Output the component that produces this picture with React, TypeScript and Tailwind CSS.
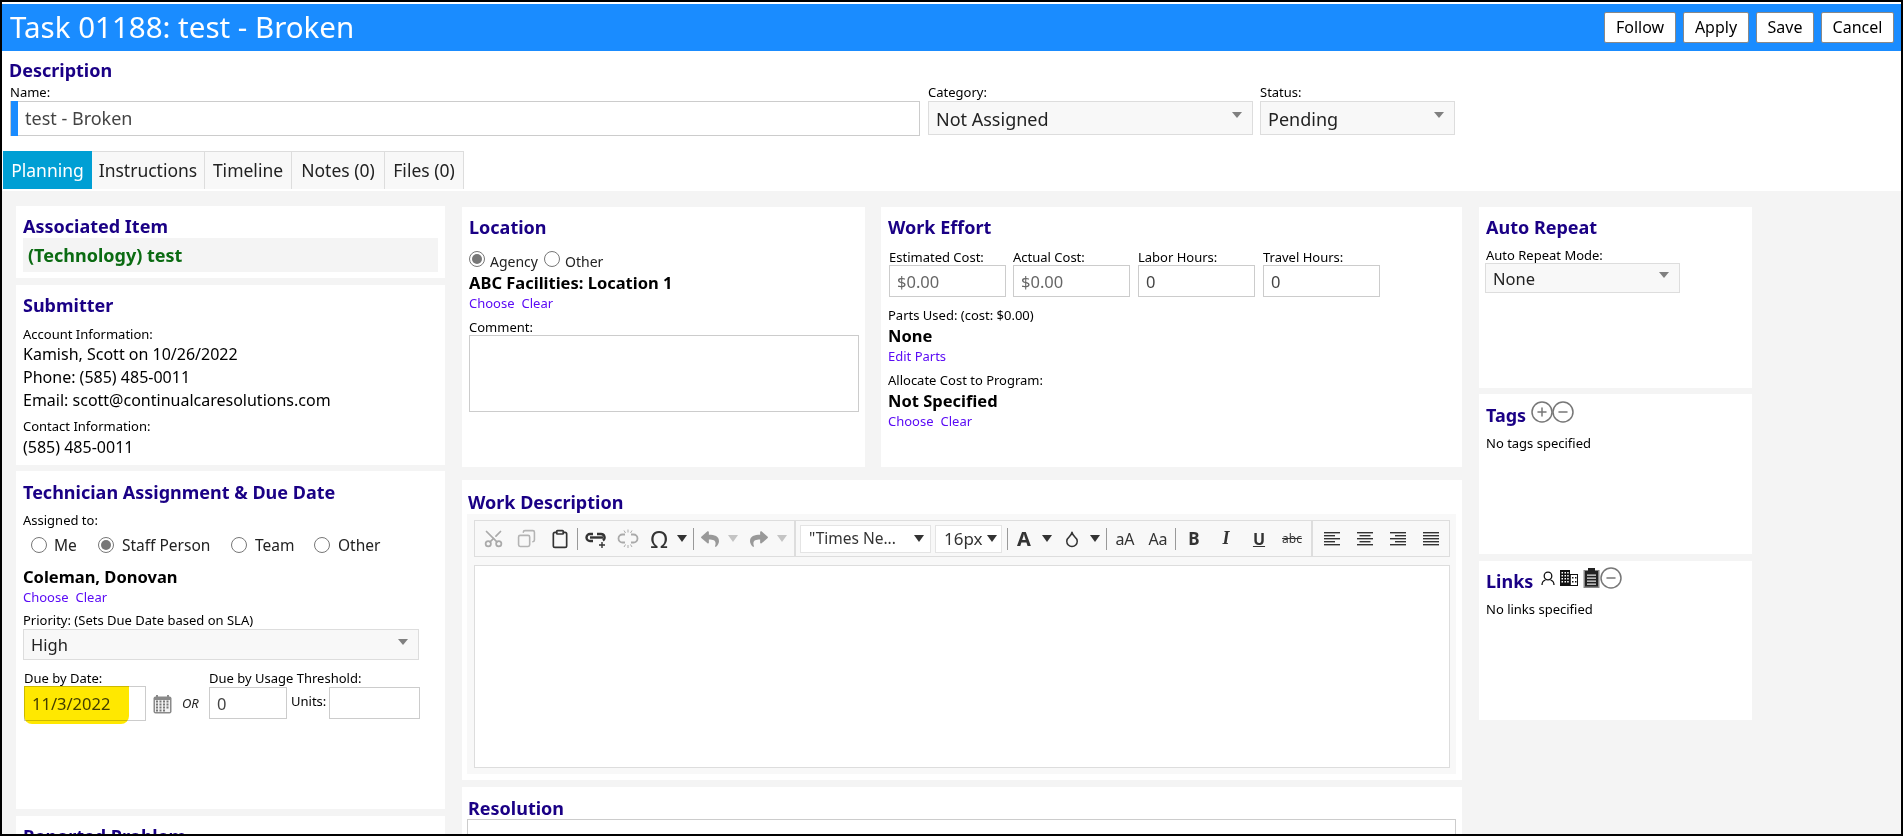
import { CircleMinus, CirclePlus, Clipboard, Copy, Droplet, Scissors } from "lucide-react";
import { FaReply, FaShare } from "react-icons/fa";

const FONT = "font-['Noto_Sans',sans-serif]";

function Heading({ children, className = "" }: { children: React.ReactNode; className?: string }) {
  return <h2 className={`text-[18px] leading-[24px] font-bold text-[#1a0085] whitespace-nowrap ${className}`}>{children}</h2>;
}

function Small({ children, className = "" }: { children: React.ReactNode; className?: string }) {
  return <div className={`text-[13px] leading-[18px] text-black whitespace-nowrap ${className}`}>{children}</div>;
}

function Bold({ children, className = "" }: { children: React.ReactNode; className?: string }) {
  return <div className={`text-[16.5px] leading-[24px] font-bold text-black whitespace-nowrap ${className}`}>{children}</div>;
}

function Links({ className = "" }: { className?: string }) {
  return (
    <div className={`flex gap-[7px] text-[13px] leading-[18px] text-[#5b0cf5] ${className}`}>
      <a>Choose</a>
      <a>Clear</a>
    </div>
  );
}

function Arrow({ className = "" }: { className?: string }) {
  return <span className={`w-0 h-0 border-x-[5px] border-x-transparent border-t-[6px] border-t-[#808080] ${className}`} />;
}

function Select({ value, className = "" }: { value: string; className?: string }) {
  return (
    <div className={`flex items-center justify-between bg-[#f8f8f8] border border-[#dddddd] pl-[7px] pr-[10px] text-[#222] ${className}`}>
      <span className="pt-[2px]">{value}</span>
      <Arrow className="mb-[6px]" />
    </div>
  );
}

function Field({ value, className = "" }: { value: string; className?: string }) {
  return (
    <input
      readOnly
      value={value}
      className={`border border-[#cccccc] bg-white pl-[7px] text-[16.5px] text-[#444] outline-none ${className}`}
    />
  );
}

function Radio({ checked = false, className = "" }: { checked?: boolean; className?: string }) {
  return (
    <span className={`flex items-center justify-center w-[16px] h-[16px] rounded-full border border-[#777] bg-white shrink-0 ${className}`}>
      {checked && <span className="w-[10px] h-[10px] rounded-full bg-[#777]" />}
    </span>
  );
}

function Caret({ light = false }: { light?: boolean }) {
  return (
    <span
      className={`w-0 h-0 border-x-[5px] border-x-transparent border-t-[7px] ${light ? "border-t-[#c4c4c4]" : "border-t-[#333]"}`}
    />
  );
}

function Btn({ className = "", children }: { className?: string; children: React.ReactNode }) {
  return <div className={`flex items-center justify-center h-[35px] shrink-0 text-[#333] ${className}`}>{children}</div>;
}

function Sep({ className = "" }: { className?: string }) {
  return <span className={`w-px h-[22px] bg-[#999] shrink-0 ${className}`} />;
}

function AlignIcon({ kind }: { kind: "left" | "center" | "right" | "full" }) {
  const lines = [16, 11, 16, 11, 16];
  return (
    <svg width="16" height="16" viewBox="0 0 16 16" fill="#333">
      {lines.map((w, i) => {
        const width = kind === "full" ? 16 : w;
        const x = kind === "left" || kind === "full" ? 0 : kind === "right" ? 16 - width : (16 - width) / 2;
        return <rect key={i} x={x} y={1 + i * 3} width={width} height="1.4" />;
      })}
    </svg>
  );
}

function LinkIcon() {
  return (
    <svg width="24" height="20" viewBox="0 0 24 20" fill="none" stroke="#333" strokeWidth="2.4">
      <path d="M9 5H6a3.5 3.5 0 0 0 0 7h3" />
      <path d="M13 5h4a3.5 3.5 0 0 1 2 6.4" />
      <path d="M6 8.5h13" />
      <path d="M18 13v6M15 16h6" strokeWidth="1.4" />
    </svg>
  );
}

function UnlinkIcon() {
  return (
    <svg width="22" height="20" viewBox="0 0 22 20" fill="none" stroke="#aaa" strokeWidth="1.8">
      <path d="M8 5.5H5.5a4 4 0 0 0 0 8H8" />
      <path d="M14 5.5h2.500a4 4 0 0 1 0 8H14" />
      <path d="M7 1.500 8.500 4M11 0.500v3M15 1.500 13.500 4M7 18 8.500 15.500M11 19v-3M15 18l-1.500-2.500" strokeWidth="1" />
    </svg>
  );
}

function Toolbar() {
  return (
    <div className="flex items-center h-[37px] border border-[#dddddd] bg-[#f8f8f8] pl-[2px] whitespace-nowrap">
      <Btn className="w-[33px]"><Scissors size={21} className="text-[#aaa] -rotate-90" /></Btn>
      <Btn className="w-[33px]"><Copy size={19} className="text-[#b4b4b4] -scale-x-100" /></Btn>
      <Btn className="w-[33px]"><Clipboard size={20} className="text-[#333]" /></Btn>
      <Sep className="ml-px" />
      <Btn className="w-[36px]"><LinkIcon /></Btn>
      <Btn className="w-[28px]"><UnlinkIcon /></Btn>
      <Btn className="w-[34px] text-[24px]">Ω</Btn>
      <Btn className="w-[12px]"><Caret /></Btn>
      <Sep className="ml-[5px]" />
      <Btn className="w-[32px]"><FaReply size={18} className="text-[#999]" /></Btn>
      <Btn className="w-[14px]"><Caret light /></Btn>
      <Btn className="w-[38px]"><FaShare size={18} className="text-[#999]" /></Btn>
      <Btn className="w-[8px]"><Caret light /></Btn>
      <span className="w-[2px] h-full bg-[#dddddd] ml-[8px] shrink-0" />
      <div className="flex items-center justify-between w-[131px] h-[28px] ml-[4px] bg-white border border-[#e4e4e4] pl-[8px] pr-[6px] text-[15.500px] text-[#333] shrink-0">
        <span>"Times Ne...</span>
        <Caret />
      </div>
      <div className="flex items-center justify-between w-[67px] h-[28px] ml-[4px] bg-white border border-[#e4e4e4] pl-[8px] pr-[4px] text-[17px] text-[#333] shrink-0">
        <span>16px</span>
        <Caret />
      </div>
      <Sep className="ml-[5px]" />
      <Btn className="w-[32px] text-[20px] font-bold">A</Btn>
      <Btn className="w-[14px]"><Caret /></Btn>
      <Btn className="w-[36px]"><Droplet size={18} /></Btn>
      <Btn className="w-[10px]"><Caret /></Btn>
      <Sep className="ml-[6px]" />
      <Btn className="w-[36px] text-[16px]">aA</Btn>
      <Btn className="w-[30px] text-[16px]">Aa</Btn>
      <Sep className="ml-[2px]" />
      <Btn className="w-[36px] text-[17px] font-bold">B</Btn>
      <Btn className="w-[28px] text-[18px] italic font-bold font-['Liberation_Serif',serif]">I</Btn>
      <Btn className="w-[38px] text-[16px] font-bold underline">U</Btn>
      <Btn className="w-[28px] text-[12px] line-through">abc</Btn>
      <span className="w-[2px] h-full bg-[#dddddd] ml-[5px] shrink-0" />
      <Btn className="w-[33px] ml-[2px]"><AlignIcon kind="left" /></Btn>
      <Btn className="w-[33px]"><AlignIcon kind="center" /></Btn>
      <Btn className="w-[33px]"><AlignIcon kind="right" /></Btn>
      <Btn className="w-[33px]"><AlignIcon kind="full" /></Btn>
    </div>
  );
}

function CalendarIcon() {
  return (
    <svg width="19" height="19" viewBox="0 0 19 19">
      <rect x="0.500" y="1.500" width="18" height="17" rx="2" fill="#8a8a8a" />
      <rect x="3" y="0" width="2" height="4" fill="#8a8a8a" />
      <rect x="14" y="0" width="2" height="4" fill="#8a8a8a" />
      <rect x="2" y="5" width="15" height="12" fill="#f2f2f2" />
      {[6, 9, 12, 15].map((y) =>
        [4, 7.500, 11, 14.500].filter((x) => y < 15 || x < 14).map((x) => (
          <rect key={`${x}-${y}`} x={x - 1} y={y - 0.500} width="2" height="2" fill="#777" />
        )),
      )}
    </svg>
  );
}

function PersonIcon() {
  return (
    <svg width="14" height="15" viewBox="0 0 14 15" fill="none" stroke="#111" strokeWidth="1.300">
      <circle cx="7" cy="5" r="3.800" />
      <path d="M1 14c0-3 2-4.500 3.500-5M13 14c0-3-2-4.500-3.500-5" />
    </svg>
  );
}

function BuildingIcon() {
  return (
    <svg width="18" height="16" viewBox="0 0 18 16">
      <rect x="0" y="0" width="10" height="16" fill="#111" />
      <rect x="10" y="4" width="8" height="12" fill="#111" />
      <rect x="10.800" y="5" width="6.200" height="10" fill="#fff" />
      {[2, 5, 8, 11].map((y) =>
        [1.500, 4.500, 7.200].map((x) => <rect key={`${x}-${y}`} x={x} y={y} width="1.500" height="1.500" fill="#fff" />),
      )}
      <rect x="12" y="7" width="1.500" height="1.500" fill="#111" />
      <rect x="15" y="7" width="1.500" height="1.500" fill="#111" />
      <rect x="12" y="11" width="1.500" height="1.500" fill="#111" />
      <rect x="15" y="11" width="1.500" height="1.500" fill="#111" />
    </svg>
  );
}

function ClipboardIcon() {
  return (
    <svg width="17" height="20" viewBox="0 0 17 20">
      <rect x="0.500" y="2" width="16" height="18" fill="#888" />
      <rect x="2" y="3" width="13" height="15.500" fill="#222" />
      <rect x="5" y="0" width="7" height="4" fill="#222" />
      {[6.500, 9.500, 12.500, 15.500].map((y) => (
        <rect key={y} x="4" y={y} width="9" height="1.300" fill="#ddd" />
      ))}
    </svg>
  );
}

const BUTTON = "h-[31px] bg-white border border-[#888] rounded-[2px] text-[16px] text-black";
const TAB = "flex items-center justify-center bg-[#f8f8f8] border border-b-0 border-l-0 border-[#dddddd] text-[#222]";

export default function App() {
  return (
    <div className={`relative h-[836px] w-[1903px] overflow-hidden bg-black p-[2px] ${FONT}`}>
      <div className="flex flex-col h-full bg-white pt-[2px] overflow-hidden">
        {/* header */}
        <header className="flex items-center justify-between h-[47px] shrink-0 bg-[#1a8cff] pl-[8px] pr-[7px]">
          <h1 className="text-[29.500px] text-white whitespace-nowrap">Task 01188: test - Broken</h1>
          <div className="flex gap-[7px] mt-[-1px]">
            <button className={`w-[72px] ${BUTTON}`}>Follow</button>
            <button className={`w-[66px] ${BUTTON}`}>Apply</button>
            <button className={`w-[58px] ${BUTTON}`}>Save</button>
            <button className={`w-[73px] ${BUTTON}`}>Cancel</button>
          </div>
        </header>

        {/* description */}
        <section className="h-[138px] shrink-0 flex flex-col">
          <Heading className="pl-[7px] mt-[7px]">Description</Heading>
          <div className="flex pl-[8px] mt-[1px]">
            <div className="w-[910px]">
              <Small>Name:</Small>
              <div className="flex h-[35px] border border-[#cccccc]">
                <span className="w-[7px] bg-[#1a8cff] -my-px" />
                <span className="pl-[7px] text-[18px] leading-[33px] text-[#444]">test - Broken</span>
              </div>
            </div>
            <div className="ml-[8px]">
              <Small>Category:</Small>
              <Select value="Not Assigned" className="w-[325px] h-[34px] text-[18px]" />
            </div>
            <div className="ml-[7px]">
              <Small>Status:</Small>
              <Select value="Pending" className="w-[195px] h-[34px] text-[18px]" />
            </div>
          </div>
          <div className="flex h-[38px] mt-auto pl-px text-[17.500px]">
            <div className="flex items-center justify-center w-[89px] bg-[#009fd4] text-white">Planning</div>
            <div className={`w-[113px] border-l-0 ${TAB}`}>Instructions</div>
            <div className={`w-[87px] ${TAB}`}>Timeline</div>
            <div className={`w-[93px] ${TAB}`}>Notes (0)</div>
            <div className={`w-[79px] ${TAB}`}>Files (0)</div>
          </div>
        </section>

        {/* planning tab */}
        <main className="flex flex-1 min-h-0 bg-[#f4f4f4] pt-[2px] mt-[2px] overflow-hidden">
          <div className="flex flex-col w-[429px] ml-[14px] mt-[13px] shrink-0">
            <section className="h-[72px] shrink-0 bg-white pt-[8px]">
              <Heading className="pl-[7px]">Associated Item</Heading>
              <div className="mx-[7px] h-[34px] bg-[#f4f4f4] pl-[5px] text-[18px] leading-[34px] font-bold text-[#0b6b12]">(Technology) test</div>
            </section>

            <section className="h-[180px] shrink-0 mt-[7px] bg-white pt-[8px] px-[7px]">
              <Heading>Submitter</Heading>
              <Small className="mt-[8px]">Account Information:</Small>
              <div className="text-[16px] leading-[23px] text-black">
                <div>Kamish, Scott on 10/26/2022</div>
                <div>Phone: (585) 485-0011</div>
                <div>Email: scott@continualcaresolutions.com</div>
              </div>
              <Small className="mt-[5px]">Contact Information:</Small>
              <div className="mt-px text-[16px] leading-[23px] text-black">(585) 485-0011</div>
            </section>

            <section className="h-[338px] shrink-0 mt-[6px] bg-white pt-[9px] px-[7px]">
              <Heading>Technician Assignment &amp; Due Date</Heading>
              <Small className="mt-[7px]">Assigned to:</Small>
              <div className="flex items-center h-[24px] mt-[4px] text-[15.500px] text-[#222] whitespace-nowrap">
                <Radio className="ml-[8px]" />
                <span className="ml-[7px] w-[36px] pt-[2px]">Me</span>
                <Radio checked className="ml-[8px]" />
                <span className="ml-[8px] w-[101px] pt-[2px]">Staff Person</span>
                <Radio className="ml-[8px]" />
                <span className="ml-[8px] w-[45px] pt-[2px]">Team</span>
                <Radio className="ml-[14px]" />
                <span className="ml-[8px] pt-[2px]">Other</span>
              </div>
              <Bold className="mt-[8px]">Coleman, Donovan</Bold>
              <Links className="-mt-px" />
              <Small className="mt-[5px] h-[18px]">Priority: (Sets Due Date based on SLA)</Small>
              <Select value="High" className="w-[396px] h-[31px] text-[16.500px]" />
              <div className="flex items-start mt-[9px]">
                <div className="ml-px">
                  <Small>Due by Date:</Small>
                  <div className="relative -mt-px">
                    <Field value="11/3/2022" className="block w-[122px] h-[35px]" />
                    <span className="absolute left-0 top-0 w-[105px] h-[38px] bg-[#ffe800] rounded-b-[8px] mix-blend-multiply" />
                  </div>
                </div>
                <div className="ml-[7px] mt-[26px]"><CalendarIcon /></div>
                <span className="ml-[10px] mt-[25px] w-[19px] text-[13px] italic text-[#222]">OR</span>
                <div className="ml-[8px]">
                  <Small>Due by Usage Threshold:</Small>
                  <div className="flex items-start">
                    <Field value="0" className="w-[78px] h-[32px]" />
                    <Small className="ml-[4px] mt-[5px] w-[34px]">Units:</Small>
                    <Field value="" className="ml-[4px] w-[91px] h-[32px]" />
                  </div>
                </div>
              </div>
            </section>

            <section className="h-[60px] shrink-0 mt-[7px] bg-white pt-[8px] px-[7px]">
              <Heading>Reported Problem</Heading>
            </section>
          </div>

          <div className="flex flex-col w-[1000px] ml-[17px] mt-[14px] shrink-0">
            <div className="flex h-[260px] shrink-0">
              <section className="w-[403px] bg-white pt-[8px] px-[7px]">
                <Heading>Location</Heading>
                <div className="flex items-center h-[20px] mt-[10px] text-[14px] text-[#222]">
                  <Radio checked />
                  <span className="ml-[5px] mt-[4px] w-[54px]">Agency</span>
                  <Radio />
                  <span className="ml-[5px] mt-[4px]">Other</span>
                </div>
                <Bold className="mt-[2px]">ABC Facilities: Location 1</Bold>
                <Links className="-mt-px" />
                <Small className="mt-[6px]">Comment:</Small>
                <div className="w-[390px] h-[77px] border border-[#cccccc] -mt-px" />
              </section>

              <section className="w-[581px] ml-[16px] bg-white pt-[8px] px-[7px]">
                <Heading>Work Effort</Heading>
                <div className="flex mt-[9px] ml-px">
                  <div className="w-[124px]">
                    <Small>Estimated Cost:</Small>
                    <Field value="$0.00" className="block w-[117px] h-[32px] -mt-px text-[#666]" />
                  </div>
                  <div className="w-[125px]">
                    <Small>Actual Cost:</Small>
                    <Field value="$0.00" className="block w-[117px] h-[32px] -mt-px text-[#666]" />
                  </div>
                  <div className="w-[125px]">
                    <Small>Labor Hours:</Small>
                    <Field value="0" className="block w-[117px] h-[32px] -mt-px" />
                  </div>
                  <div>
                    <Small>Travel Hours:</Small>
                    <Field value="0" className="block w-[117px] h-[32px] -mt-px" />
                  </div>
                </div>
                <Small className="mt-[9px]">Parts Used: (cost: $0.00)</Small>
                <Bold>None</Bold>
                <div className="-mt-px text-[13px] leading-[18px] text-[#5b0cf5]">Edit Parts</div>
                <Small className="mt-[6px]">Allocate Cost to Program:</Small>
                <Bold>Not Specified</Bold>
                <Links className="-mt-px" />
              </section>
            </div>

            <section className="h-[300px] mt-[13px] bg-white shrink-0 pl-[5px] pr-[6px]">
              <Heading className="pt-[10px] pl-px h-[34px]">Work Description</Heading>
              <div className="h-[260px] bg-[#f8f8f8] pt-[6px] pl-[7px] pr-[6px]">
                <Toolbar />
                <div className="h-[203px] mt-[8px] bg-white border border-[#dddddd]" />
              </div>
            </section>

            <section className="h-[80px] mt-[7px] bg-white shrink-0 pl-[5px] pr-[6px]">
              <Heading className="pt-[9px] pl-px h-[32px]">Resolution</Heading>
              <div className="h-[49px] bg-white border border-[#cccccc]" />
            </section>
          </div>

          <div className="flex flex-col w-[273px] ml-[17px] mt-[14px] shrink-0">
            <section className="h-[181px] shrink-0 bg-white pt-[8px] px-[7px]">
              <Heading>Auto Repeat</Heading>
              <Small className="mt-[7px]">Auto Repeat Mode:</Small>
              <Select value="None" className="w-[195px] h-[30px] -ml-px -mt-px text-[16.500px]" />
            </section>
            <section className="h-[160px] shrink-0 mt-[6px] bg-white pt-[8px] px-[7px]">
              <div className="flex items-start">
                <Heading className="mt-[1px]">Tags</Heading>
                <CirclePlus size={24} strokeWidth={1.5} className="ml-[4px] -mt-[2px] text-[#777]" />
                <CircleMinus size={24} strokeWidth={1.5} className="-ml-[3px] -mt-[2px] text-[#777]" />
              </div>
              <Small className="mt-[7px]">No tags specified</Small>
            </section>
            <section className="h-[159px] shrink-0 mt-[7px] bg-white pt-[8px] px-[7px]">
              <div className="flex items-start">
                <Heading>Links</Heading>
                <span className="ml-[8px] mt-[2px]"><PersonIcon /></span>
                <span className="ml-[5px] mt-[1px]"><BuildingIcon /></span>
                <span className="ml-[5px] -mt-[1px]"><ClipboardIcon /></span>
                <CircleMinus size={24} strokeWidth={1.5} className="-ml-px -mt-[3px] text-[#777]" />
              </div>
              <Small className="mt-[7px]">No links specified</Small>
            </section>
          </div>
        </main>
      </div>
    </div>
  );
}
